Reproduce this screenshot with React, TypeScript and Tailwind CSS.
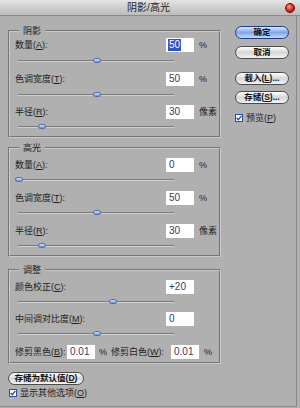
import React from "react";

const FONT = {
  fontFamily: '"Liberation Sans", "Noto Sans CJK SC", sans-serif',
};

function U({ c }: { c: string }) {
  return <span className="underline">{c}</span>;
}

function Label({ text, k }: { text: string; k: string }) {
  return (
    <span className="whitespace-nowrap">
      {text}(<U c={k} />):
    </span>
  );
}

function Input({ value, selected }: { value: string; selected?: boolean }) {
  return (
    <div className="w-[28px] h-[14px] bg-white flex items-center pl-[2px] text-[10px] text-[#3a3a5a]">
      {selected ? (
        <span className="bg-[#2f55c8] text-white px-[1px] leading-[12px]">{value}</span>
      ) : (
        <span className="px-[1px] leading-[12px]">{value}</span>
      )}
    </div>
  );
}

function Slider({ pos }: { pos: number }) {
  return (
    <div className="relative h-[8px] ml-[3px] w-[156px]">
      <div className="absolute left-0 right-0 top-[3px] h-[1px] bg-[#7a7a7a]" />
      <div className="absolute left-0 right-0 top-[4px] h-[1px] bg-[#cfcfcf]" />
      <div
        className="absolute top-[1px] w-[8px] h-[5px] rounded-full border border-[#4a6aa8] bg-gradient-to-b from-[#d6e6ff] to-[#6d94d8]"
        style={{ left: pos - 4 }}
      />
    </div>
  );
}

function Row({
  label,
  k,
  value,
  unit,
  selected,
}: {
  label: string;
  k: string;
  value: string;
  unit?: string;
  selected?: boolean;
}) {
  return (
    <div className="flex items-center h-[14px]">
      <div className="w-[151px]">
        <Label text={label} k={k} />
      </div>
      <Input value={value} selected={selected} />
      {unit && <span className="ml-[5px] whitespace-nowrap">{unit}</span>}
    </div>
  );
}

function Group({
  title,
  children,
  className,
}: {
  title: string;
  children: React.ReactNode;
  className?: string;
}) {
  return (
    <fieldset
      className={
        "w-[213px] border-2 [border-style:groove] border-[#cacaca] pl-[5px] pr-0 " +
        (className || "")
      }
    >
      <legend className="ml-[4px] px-[4px] leading-[12px]">{title}</legend>
      {children}
    </fieldset>
  );
}

function Button({
  children,
  primary,
  w,
}: {
  children: React.ReactNode;
  primary?: boolean;
  w: string;
}) {
  return (
    <div
      className={
        w +
        " h-[13px] rounded-full flex items-center justify-center text-[8.5px] font-semibold leading-none text-[#111] " +
        (primary
          ? "border border-[#1c3b8c] bg-gradient-to-b from-[#dbe9ff] via-[#7fa6e8] to-[#c5dcff]"
          : "border border-[#4a4a4a] bg-gradient-to-b from-[#ffffff] via-[#d6d6d6] to-[#f4f4f4]")
      }
    >
      {children}
    </div>
  );
}

function Check({ children }: { children: React.ReactNode }) {
  return (
    <div className="flex items-center h-[10px]">
      <div className="w-[8px] h-[8px] bg-white border border-[#2b4f9e] flex items-center justify-center">
        <svg width="6" height="6" viewBox="0 0 6 6">
          <path d="M0.6 3 L2.3 4.8 L5.4 0.8" stroke="#1f46b0" strokeWidth="1.3" fill="none" />
        </svg>
      </div>
      <span className="ml-[3px] whitespace-nowrap">{children}</span>
    </div>
  );
}

export default function App() {
  return (
    <div
      className="w-[300px] h-[408px] bg-[#b0b0b0] overflow-hidden text-[9px] leading-[12px] text-[#1e1e1e] flex flex-col"
      style={FONT}
    >
      {/* title bar */}
      <div className="h-[16px] shrink-0 flex items-center bg-gradient-to-b from-[#e4e4e4] via-[#cfcfcf] to-[#bcbcbc] border-b border-[#8c8c8c]">
        <div className="flex-1 text-center text-[10px] text-[#202020] pl-[12px]">阴影/高光</div>
        <div className="w-[10px] h-[10px] mr-[5px] rounded-full border border-[#6a0000] bg-[radial-gradient(circle_at_40%_35%,#ffb0a0_0%,#f03a2a_40%,#a00000_100%)]" />
      </div>

      <div className="flex flex-1 border-r border-b border-[#8a8a8a] mr-[3px] mb-[1px]">
        {/* left column */}
        <div className="w-[221px] pl-[8px] flex flex-col">
          <Group title="阴影" className="mt-[9px] pb-[5px]">
            <div className="mt-[1px]">
              <Row label="数量" k="A" value="50" unit="%" selected />
            </div>
            <div className="mt-[5px]">
              <Slider pos={79} />
            </div>
            <div className="mt-[7px]">
              <Row label="色调宽度" k="T" value="50" unit="%" />
            </div>
            <div className="mt-[5px]">
              <Slider pos={79} />
            </div>
            <div className="mt-[6px]">
              <Row label="半径" k="R" value="30" unit="像素" />
            </div>
            <div className="mt-[4px]">
              <Slider pos={24} />
            </div>
          </Group>

          <Group title="高光" className="mt-[4px] pb-[5px]">
            <div className="mt-[4px]">
              <Row label="数量" k="A" value="0" unit="%" />
            </div>
            <div className="mt-[4px]">
              <Slider pos={1} />
            </div>
            <div className="mt-[7px]">
              <Row label="色调宽度" k="T" value="50" unit="%" />
            </div>
            <div className="mt-[4px]">
              <Slider pos={79} />
            </div>
            <div className="mt-[7px]">
              <Row label="半径" k="R" value="30" unit="像素" />
            </div>
            <div className="mt-[4px]">
              <Slider pos={24} />
            </div>
          </Group>

          <Group title="调整" className="mt-[7px] pb-[3px]">
            <div className="mt-[4px]">
              <Row label="颜色校正" k="C" value="+20" />
            </div>
            <div className="mt-[4px]">
              <Slider pos={95} />
            </div>
            <div className="mt-[6px]">
              <Row label="中间调对比度" k="M" value="0" />
            </div>
            <div className="mt-[4px]">
              <Slider pos={79} />
            </div>
            <div className="mt-[7px] flex items-center h-[14px]">
              <div className="w-[52px]">
                <Label text="修剪黑色" k="B" />
              </div>
              <Input value="0.01" />
              <span className="ml-[4px]">%</span>
              <span className="ml-[4px] w-[60px] whitespace-nowrap">
                修剪白色(<U c="W" />):
              </span>
              <Input value="0.01" />
              <span className="ml-[5px]">%</span>
            </div>
          </Group>

          <div className="mt-[8px]">
            <Button w="w-[76px]">
              存储为默认值(<U c="D" />)
            </Button>
          </div>
          <div className="mt-[3px] ml-[1px]">
            <Check>
              显示其他选项(<U c="O" />)
            </Check>
          </div>
        </div>

        {/* right column */}
        <div className="ml-[14px] flex flex-col">
          <div className="mt-[10px]">
            <Button w="w-[54px]" primary>
              确定
            </Button>
          </div>
          <div className="mt-[7px]">
            <Button w="w-[54px]">取消</Button>
          </div>
          <div className="mt-[13px]">
            <Button w="w-[54px]">
              载入(<U c="L" />)...
            </Button>
          </div>
          <div className="mt-[6px]">
            <Button w="w-[54px]">
              存储(<U c="S" />)...
            </Button>
          </div>
          <div className="mt-[9px]">
            <Check>
              预览(<U c="P" />)
            </Check>
          </div>
        </div>
      </div>
    </div>
  );
}
